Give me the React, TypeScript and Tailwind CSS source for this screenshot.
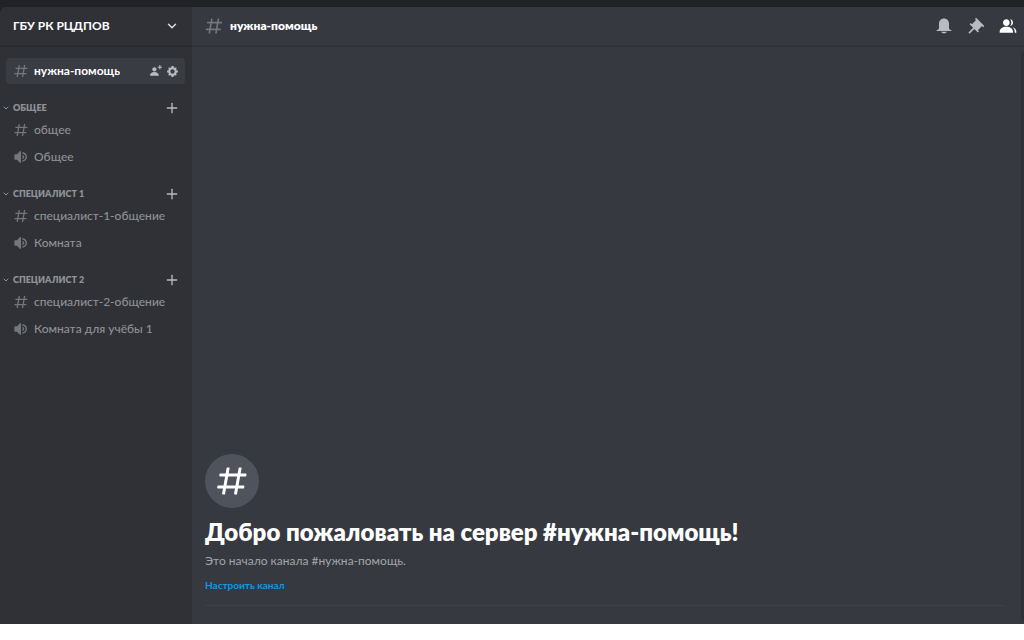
import { ChevronDown, Plus } from 'lucide-react';
import { clsx } from 'clsx';

type ChannelType = 'text' | 'voice';

interface Channel {
  name: string;
  type: ChannelType;
}

interface Category {
  title: string;
  channels: Channel[];
}

const categories: Category[] = [
  {
    title: 'Общее',
    channels: [
      { name: 'общее', type: 'text' },
      { name: 'Общее', type: 'voice' },
    ],
  },
  {
    title: 'Специалист 1',
    channels: [
      { name: 'специалист-1-общение', type: 'text' },
      { name: 'Комната', type: 'voice' },
    ],
  },
  {
    title: 'Специалист 2',
    channels: [
      { name: 'специалист-2-общение', type: 'text' },
      { name: 'Комната для учёбы 1', type: 'voice' },
    ],
  },
];

const iconPaths = {
  text: 'M5.88657 21C5.57547 21 5.3399 20.7189 5.39427 20.4126L6.00001 17H2.59511C2.28449 17 2.04905 16.7198 2.10259 16.4138L2.27759 15.4138C2.31946 15.1746 2.52722 15 2.77011 15H6.35001L7.41001 9H4.00511C3.69449 9 3.45905 8.71977 3.51259 8.41381L3.68759 7.41381C3.72946 7.17456 3.93722 7 4.18011 7H7.76001L8.39677 3.41262C8.43914 3.17391 8.64664 3 8.88907 3H9.87344C10.1845 3 10.4201 3.28107 10.3657 3.58738L9.76001 7H15.76L16.3968 3.41262C16.4391 3.17391 16.6466 3 16.8891 3H17.8734C18.1845 3 18.4201 3.28107 18.3657 3.58738L17.76 7H21.1649C21.4755 7 21.711 7.28023 21.6574 7.58619L21.4824 8.58619C21.4406 8.82544 21.2328 9 20.9899 9H17.41L16.35 15H19.7549C20.0655 15 20.301 15.2802 20.2474 15.5862L20.0724 16.5862C20.0306 16.8254 19.8228 17 19.5799 17H16L15.3632 20.5874C15.3209 20.8261 15.1134 21 14.8709 21H13.8866C13.5755 21 13.3399 20.7189 13.3943 20.4126L14 17H8.00001L7.36325 20.5874C7.32088 20.8261 7.11337 21 6.87094 21H5.88657ZM9.41001 9L8.35001 15H14.35L15.41 9H9.41001Z',
  voice:
    'M11.383 3.079C11.009 2.925 10.579 3.01 10.293 3.296L6 8.002H3C2.45 8.002 2 8.453 2 9.002V15.002C2 15.552 2.45 16.002 3 16.002H6L10.293 20.71C10.579 20.996 11.009 21.082 11.383 20.927C11.757 20.772 12 20.407 12 20.002V4.002C12 3.599 11.757 3.232 11.383 3.079ZM14 5.002V7.002C16.757 7.002 19 9.246 19 12.002C19 14.759 16.757 17.002 14 17.002V19.002C17.86 19.002 21 15.863 21 12.002C21 8.143 17.86 5.002 14 5.002ZM14 9.002C15.654 9.002 17 10.349 17 12.002C17 13.657 15.654 15.002 14 15.002V13.002C14.551 13.002 15 12.553 15 12.002C15 11.451 14.551 11.002 14 11.002V9.002Z',
  bell: 'M18 9V14C18 15.657 19.344 17 21 17V18H3V17C4.656 17 6 15.657 6 14V9C6 5.686 8.686 3 12 3C15.314 3 18 5.686 18 9ZM12 21C10.524 21 9.248 20.19 8.555 19H15.445C14.752 20.19 13.476 21 12 21Z',
  pin: 'M22 12L12.101 2.101L10.686 3.514L12.101 4.929L7.151 9.878V9.88L5.736 8.465L4.322 9.88L8.565 14.122L2.908 19.778L4.322 21.192L9.979 15.536L14.222 19.778L15.636 18.364L14.222 16.95L19.171 12H19.172L20.586 13.414L22 12Z',
  members:
    'M14 8.006C14 10.211 12.206 12.006 10 12.006C7.795 12.006 6 10.211 6 8.006C6 5.801 7.794 4.006 10 4.006C12.206 4.006 14 5.801 14 8.006ZM2 19.006C2 15.473 5.29 13.006 10 13.006C14.711 13.006 18 15.473 18 19.006V20.006H2V19.006ZM20 20.006H22V19.006C22 16.443 20.27 14.442 17.521 13.535C19.062 14.913 20 16.806 20 19.006V20.006ZM14.883 11.908C16.666 11.504 18 9.908 18 8.006C18 5.969 16.469 4.282 14.497 4.037C15.432 5.095 16 6.485 16 8.006C16 9.449 15.489 10.774 14.638 11.81L14.883 11.908Z',
  invite:
    'M21 3H24V5H21V8H19V5H16V3H19V0H21V3ZM10 12C12.205 12 14 10.205 14 8C14 5.795 12.205 4 10 4C7.795 4 6 5.795 6 8C6 10.205 7.795 12 10 12ZM10 13C5.289 13 2 15.467 2 19V20H18V19C18 15.467 14.711 13 10 13Z',
  gear: 'M19.738 10H22V14H19.739C19.498 14.931 19.1 15.798 18.565 16.564L20 18L18 20L16.565 18.564C15.797 19.099 14.932 19.498 14 19.738V22H10V19.738C9.069 19.498 8.203 19.099 7.436 18.564L6 20L4 18L5.436 16.564C4.901 15.799 4.502 14.932 4.262 14H2V10H4.262C4.502 9.068 4.9 8.202 5.436 7.436L4 6L6 4L7.436 5.436C8.202 4.9 9.068 4.502 10 4.262V2H14V4.261C14.932 4.502 15.797 4.9 16.565 5.435L18 3.999L20 5.999L18.564 7.436C19.099 8.202 19.498 9.069 19.738 10ZM12 16C14.209 16 16 14.209 16 12C16 9.791 14.209 8 12 8C9.791 8 8 9.791 8 12C8 14.209 9.791 16 12 16Z',
};

function Icon({ name, className }: { name: keyof typeof iconPaths; className?: string }) {
  return (
    <svg viewBox="0 0 24 24" fill="currentColor" aria-hidden="true" className={clsx('shrink-0', className)}>
      <path fillRule="evenodd" clipRule="evenodd" d={iconPaths[name]} />
    </svg>
  );
}

function ChannelRow({ channel, active = false }: { channel: Channel; active?: boolean }) {
  return (
    <div
      className={clsx(
        'flex h-[26px] items-center rounded pr-1.5 pl-[7px]',
        active ? 'bg-[#393c43] text-white' : 'text-[#8e9297]'
      )}
    >
      <a href="#" className="flex min-w-0 flex-1 items-center gap-[5px]">
        <Icon name={channel.type} className="size-4 text-[#72767d]" />
        <span className={clsx('truncate text-xs leading-5', active ? 'font-bold' : 'font-medium')}>
          {channel.name}
        </span>
      </a>
      {active && (
        <div className="flex gap-1 text-[#b9bbbe]">
          <button type="button" aria-label="Создать приглашение">
            <Icon name="invite" className="size-[13px]" />
          </button>
          <button type="button" aria-label="Настроить канал">
            <Icon name="gear" className="size-[13px]" />
          </button>
        </div>
      )}
    </div>
  );
}

function CategorySection({ category }: { category: Category }) {
  return (
    <section className="mt-3.5">
      <div className="flex h-[19px] items-center justify-between pr-[5px] text-[#8e9297]">
        <button type="button" className="-ml-1 flex items-center gap-[3px] text-[9px] leading-4 font-extrabold uppercase">
          <ChevronDown className="size-2" strokeWidth={3} />
          {category.title}
        </button>
        <button type="button" aria-label="Создать канал" className="text-[#b9bbbe]">
          <Plus className="size-4" strokeWidth={2} />
        </button>
      </div>
      <div className="flex flex-col gap-px">
        {category.channels.map((channel) => (
          <ChannelRow key={channel.name} channel={channel} />
        ))}
      </div>
    </section>
  );
}

function Sidebar() {
  return (
    <aside className="flex w-48 shrink-0 flex-col rounded-tl-md bg-[#2f3136]">
      <button
        type="button"
        className="flex h-10 items-center justify-between border-b-2 border-[#292b2f] px-[13px] text-xs font-bold text-white"
      >
        ГБУ РК РЦДПОВ
        <ChevronDown className="size-3.5 text-[#dcddde]" strokeWidth={2.5} />
      </button>
      <nav className="pt-[11px] pr-[7px] pl-1.5">
        <ChannelRow channel={{ name: 'нужна-помощь', type: 'text' }} active />
        {categories.map((category) => (
          <CategorySection key={category.title} category={category} />
        ))}
      </nav>
    </aside>
  );
}

function ChannelHeader() {
  return (
    <header className="flex h-10 items-center border-b-2 border-[#303237] pr-1.5 pl-3">
      <Icon name="text" className="size-5 text-[#72767d]" />
      <h2 className="ml-1.5 flex-1 text-xs font-extrabold text-white">нужна-помощь</h2>
      <div className="flex items-center gap-3 text-[#b9bbbe]">
        <button type="button" aria-label="Уведомления">
          <Icon name="bell" className="size-5" />
        </button>
        <button type="button" aria-label="Закреплённые сообщения">
          <Icon name="pin" className="size-5" />
        </button>
        <button type="button" aria-label="Участники" className="text-white">
          <Icon name="members" className="size-5" />
        </button>
      </div>
    </header>
  );
}

function Welcome() {
  return (
    <div className="mr-4 ml-[13px] border-b border-[#3e4045] pb-3">
      <div className="flex size-[54px] items-center justify-center rounded-full bg-[#4f545c] text-white">
        <Icon name="text" className="size-9" />
      </div>
      <h1 className="mt-2 text-2xl font-extrabold text-white">Добро пожаловать на сервер #нужна-помощь!</h1>
      <p className="mt-[3px] text-xs leading-5 text-[#a3a6aa]">Это начало канала #нужна-помощь.</p>
      <a href="#" className="mt-1.5 block text-[10px] leading-4 font-bold text-[#1598dc]">
        Настроить канал
      </a>
    </div>
  );
}

export default function App() {
  return (
    <div className="h-screen bg-white pb-4 font-['Lato','Noto_Sans',sans-serif]">
      <div className="flex h-full flex-col bg-[#202225] pt-[7px]">
        <div className="flex min-h-0 flex-1">
          <Sidebar />
          <main className="flex min-w-0 flex-1 flex-col bg-[#36393f]">
            <ChannelHeader />
            <div className="flex min-h-0 flex-1">
              <div className="flex min-w-0 flex-1 flex-col justify-end pb-[18px]">
                <Welcome />
              </div>
              <div className="mt-1 mb-[3px] w-[3px] rounded-l bg-[#2e3338]" />
            </div>
          </main>
        </div>
      </div>
    </div>
  );
}
